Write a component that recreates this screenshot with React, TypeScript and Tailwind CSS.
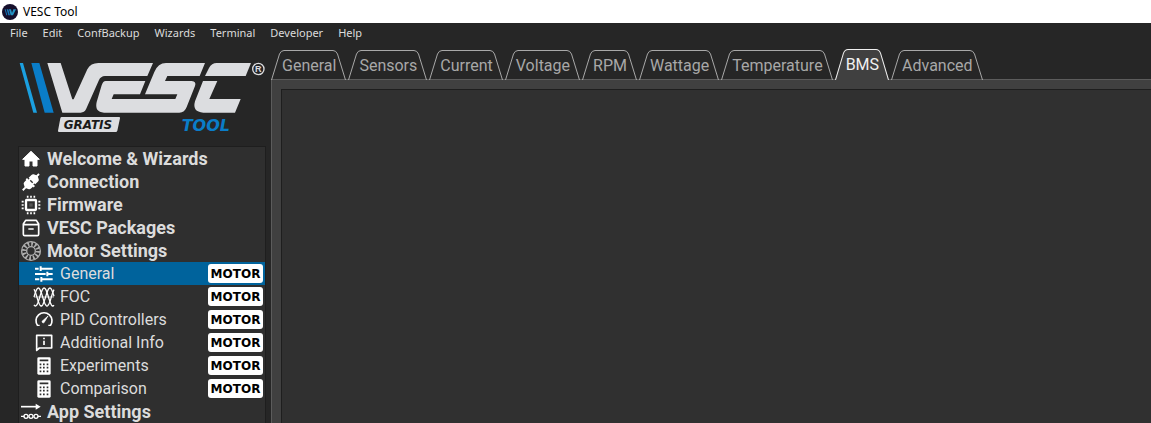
import clsx from "clsx";
import type { ReactNode } from "react";

const menus = ["File", "Edit", "ConfBackup", "Wizards", "Terminal", "Developer", "Help"];

const tabs = [
  "General",
  "Sensors",
  "Current",
  "Voltage",
  "RPM",
  "Wattage",
  "Temperature",
  "BMS",
  "Advanced",
];

function Icon({ children }: { children: ReactNode }) {
  return (
    <svg
      aria-hidden="true"
      viewBox="0 0 60 60"
      className="size-5 shrink-0 overflow-visible fill-none stroke-white"
    >
      {children}
    </svg>
  );
}

function HomeIcon() {
  return (
    <Icon>
      <path
        d="M30 7 55 31H48V51H36V36H24V51H12V31H5Z"
        className="fill-white"
        strokeWidth="3"
        strokeLinejoin="round"
      />
    </Icon>
  );
}

function PlugIcon() {
  return (
    <Icon>
      <g transform="rotate(45 30 30)" stroke="none" className="fill-white">
        <path d="M27 -4h6v8l8 4q3 2 3 6v12H16V14q0-4 3-6l8-4Z" />
        <path d="M20 24h5v8h-5ZM35 24h5v8h-5Z" />
        <path d="M13 30h34v6H44v8q0 4-3 6l-8 4v11h-6V54l-8-4q-3-2-3-6v-8H13Z" />
      </g>
    </Icon>
  );
}

function ChipIcon() {
  return (
    <Icon>
      <rect x="15" y="15" width="30" height="30" rx="2" strokeWidth="7" />
      <rect x="25" y="25" width="10" height="10" stroke="none" className="fill-[#555555]" />
      <path
        d="M20 2v6M30 2v6M40 2v6M20 52v6M30 52v6M40 52v6M2 20h6M2 30h6M2 40h6M52 20h6M52 30h6M52 40h6"
        strokeWidth="5"
      />
    </Icon>
  );
}

function PackageIcon() {
  return (
    <Icon>
      <path
        d="M14 7H46L53 18V49Q53 53 49 53H11Q7 53 7 49V18ZM7 20H53M22 33H38"
        strokeWidth="5"
        strokeLinejoin="round"
      />
    </Icon>
  );
}

function MotorIcon() {
  return (
    <Icon>
      <g className="stroke-[#b0b0b0]">
        <circle cx="30" cy="30" r="28" strokeWidth="4" />
        <circle cx="30" cy="30" r="13" strokeWidth="4" />
        <circle cx="30" cy="30" r="21" strokeWidth="12" strokeDasharray="5 6" />
      </g>
    </Icon>
  );
}

function SlidersIcon() {
  return (
    <Icon>
      <path
        d="M3 14H14M20 14H56M20 7V21M3 30H35M43 30H56M40 23V37M3 46H16M22 46H56M22 39V53"
        strokeWidth="6"
      />
    </Icon>
  );
}

// one sine trace of the three phases
const wave = (phase: number) =>
  Array.from({ length: 41 }, (_, i) => {
    const x = i * 1.5;
    const y = 30 - 27 * Math.sin((x / 52) * Math.PI * 2 + phase);
    return `${i ? "L" : "M"}${x.toFixed(1)} ${y.toFixed(1)}`;
  }).join("");

function WavesIcon() {
  return (
    <Icon>
      {[0, 2.09, 4.19].map((phase) => (
        <path key={phase} d={wave(phase)} strokeWidth="4" />
      ))}
      <path d="M0 30H60" strokeWidth="2" />
    </Icon>
  );
}

function GaugeIcon() {
  return (
    <Icon>
      <path d="M11 47A24 24 0 1 1 49 47" strokeWidth="5" strokeLinejoin="round" />
      <path d="M9 46H17M43 46H51" strokeWidth="4" />
      <path d="M24 34 42 18 30 38A4 4 0 0 1 24 34Z" className="fill-white" strokeWidth="2" />
    </Icon>
  );
}

function InfoIcon() {
  return (
    <Icon>
      <path d="M8 7H53V45H16L8 52Z" strokeWidth="5" strokeLinejoin="round" />
      <path d="M30 14V19M30 23V36" strokeWidth="5" />
    </Icon>
  );
}

function CalculatorIcon() {
  return (
    <Icon>
      <rect x="10" y="4" width="40" height="52" rx="4" stroke="none" className="fill-white" />
      <path
        d="M17 13H43M17 25h5M27 25h5M38 25h5M17 35h5M27 35h5M38 35h5M17 46h5M27 46h5M38 46h5"
        className="stroke-[#2f2f2f]"
        strokeWidth="5"
      />
    </Icon>
  );
}

function AppIcon() {
  return (
    <Icon>
      <path d="M0 14H50" strokeWidth="5" />
      <path d="M44 5 59 14 44 23Z" className="fill-white" stroke="none" />
      <path d="M0 43H10M50 43H60" strokeWidth="4" />
      <circle cx="15" cy="43" r="6" strokeWidth="4" />
      <circle cx="30" cy="43" r="6" strokeWidth="4" />
      <circle cx="45" cy="43" r="6" strokeWidth="4" />
    </Icon>
  );
}

const pages = [
  { name: "Welcome & Wizards", icon: <HomeIcon /> },
  { name: "Connection", icon: <PlugIcon /> },
  { name: "Firmware", icon: <ChipIcon /> },
  { name: "VESC Packages", icon: <PackageIcon /> },
  { name: "Motor Settings", icon: <MotorIcon /> },
  { name: "General", icon: <SlidersIcon />, sub: true },
  { name: "FOC", icon: <WavesIcon />, sub: true },
  { name: "PID Controllers", icon: <GaugeIcon />, sub: true },
  { name: "Additional Info", icon: <InfoIcon />, sub: true },
  { name: "Experiments", icon: <CalculatorIcon />, sub: true },
  { name: "Comparison", icon: <CalculatorIcon />, sub: true },
  { name: "App Settings", icon: <AppIcon /> },
];

function Logo() {
  return (
    <svg
      role="img"
      aria-label="VESC Tool"
      viewBox="27 30 744 213"
      className="h-[71px] w-[248px] overflow-visible fill-[#dcdde0]"
    >
      <path d="M29 33H39L81 182H70Z" className="fill-[#1ba0e0]" />
      <path d="M64 33H88L131 182H104Z" className="fill-[#0a7dc8]" />
      <path d="M112 33H152L187 142H191L232 52Q242 33 265 33H429L412 72H285Q272 73 267 84L228 172Q223 182 212 182H157Z" />
      <path d="M287 87H406L390 127H311L305 141H496L502 127H405L433 60Q444 33 468 33H585L569 72H472L465 87H545Q560 88 555 102L530 165Q524 182 508 182H282Q253 180 260 150L275 100Q279 87 287 87Z" />
      <path d="M585 72 597 48Q605 33 620 33H723L707 72Z" />
      <path d="M579 87H622L598 141H692L675 182H580Q546 180 555 148Z" />
      <circle cx="745" cy="51" r="17" className="fill-none stroke-[#dcdde0]" strokeWidth="4" />
      <text
        x="745"
        y="60"
        textAnchor="middle"
        fontSize="27"
        className="font-['Liberation_Sans',sans-serif] font-bold"
      >
        R
      </text>
      <path d="M155 195H327Q331 195 330 199L322 236Q321 240 317 240H148Q143 240 144 236L151 199Q152 195 155 195Z" />
      <text
        x="161"
        y="231"
        fontSize="36"
        className="fill-[#1a1a1a] font-['DejaVu_Sans',sans-serif] font-bold italic"
      >
        GRATIS
      </text>
      <text
        x="515"
        y="237"
        fontSize="48"
        className="fill-[#0a7dc8] font-['DejaVu_Sans',sans-serif] font-bold italic"
      >
        TOOL
      </text>
    </svg>
  );
}

function TitleIcon() {
  return (
    <svg aria-hidden="true" viewBox="0 0 48 48" className="size-4">
      <circle cx="24" cy="24" r="24" className="fill-[#160f2c]" />
      <path d="M8 16H11L16 34H13ZM14 16H19L24 34H19Z" className="fill-[#1676b8]" />
      <path d="M21 16H27L30 27 34 16H42L33 34H26Z" className="fill-[#2593c4]" />
    </svg>
  );
}

function Tab({ name, selected }: { name: string; selected: boolean }) {
  const stroke = selected ? "stroke-[#f0f0f0]" : "stroke-[#a8a8a8]";
  const fill = selected ? "fill-[#404040]" : "fill-none";

  return (
    <button
      type="button"
      role="tab"
      aria-selected={selected}
      className={clsx(
        "relative pl-[11px] pr-2.5",
        selected ? "h-[31px] text-[#f0f0f0]" : "h-[30px] pt-0.5 text-[#a8a8a8]",
      )}
    >
      <svg
        aria-hidden="true"
        viewBox="0 0 16 30"
        preserveAspectRatio="none"
        className={clsx("absolute inset-y-0 left-0 h-full w-4", fill, stroke)}
      >
        <path d="M0 30 8 4Q9.500 .5 13 .5H16V30Z" stroke="none" />
        <path d="M.5 30 8.500 4Q10 .5 13 .5H16" className="fill-none" />
      </svg>
      <span
        className={clsx(
          "absolute inset-x-4 inset-y-0 border-t",
          selected ? "border-[#f0f0f0] bg-[#404040]" : "border-[#a8a8a8]",
        )}
      />
      <svg
        aria-hidden="true"
        viewBox="0 0 16 30"
        preserveAspectRatio="none"
        className={clsx("absolute inset-y-0 right-0 h-full w-4", fill, stroke)}
      >
        <path d="M16 30 8 4Q6.500 .5 3 .5H0V30Z" stroke="none" />
        <path d="M15.500 30 7.500 4Q6 .5 3 .5H0" className="fill-none" />
      </svg>
      <span className="relative">{name}</span>
    </button>
  );
}

export default function App() {
  return (
    <div className="flex min-h-screen flex-col overflow-hidden bg-[#262626] font-[Roboto,sans-serif] text-base text-[#dcdcdc]">
      <header className="flex h-[23px] items-center gap-[5px] bg-white px-0.5 font-['Noto_Sans',sans-serif] text-xs text-black">
        <TitleIcon />
        <h1>VESC Tool</h1>
      </header>

      <nav className="flex h-5 items-center gap-[15px] px-2.5 font-['Noto_Sans',sans-serif] text-[11px]">
        {menus.map((menu) => (
          <button key={menu} type="button">
            {menu}
          </button>
        ))}
      </nav>

      <div className="flex flex-1">
        <aside className="flex w-[271px] shrink-0 flex-col pl-[19px] pr-1">
          <div className="pb-3.5 pt-[19px]">
            <Logo />
          </div>
          <ul className="mr-0.5 flex-1 bg-[#2f2f2f] outline outline-[#1e1e1e]">
            {pages.map((page, index) => (
              <li key={index}>
                <button
                  type="button"
                  className={clsx(
                    "flex h-[23px] w-full items-center gap-1.5 pr-0.5 text-left",
                    page.sub ? "pl-[15px]" : "pl-0.5 text-lg font-bold",
                    index === 5 && "bg-[#00639c]",
                  )}
                >
                  {page.icon}
                  <span className="flex-1 whitespace-nowrap">{page.name}</span>
                  {page.sub && (
                    <span className="flex h-[19px] w-[55px] items-center justify-center rounded-[3px] bg-white font-['DejaVu_Sans',sans-serif] text-xs font-bold text-black">
                      MOTOR
                    </span>
                  )}
                </button>
              </li>
            ))}
          </ul>
        </aside>

        <main className="flex min-w-0 flex-1 flex-col pt-1.5">
          <div role="tablist" className="relative -mb-px flex items-end gap-0.5 whitespace-nowrap">
            {tabs.map((tab) => (
              <Tab key={tab} name={tab} selected={tab === "BMS"} />
            ))}
          </div>
          <div
            role="tabpanel"
            aria-label="BMS"
            className="flex flex-1 border-l border-t border-[#5c5c5c] bg-[#404040] pl-[9px] pt-[9px]"
          >
            <div className="flex-1 border-l border-t border-[#1e1e1e] bg-[#303030]" />
          </div>
        </main>
      </div>
    </div>
  );
}
